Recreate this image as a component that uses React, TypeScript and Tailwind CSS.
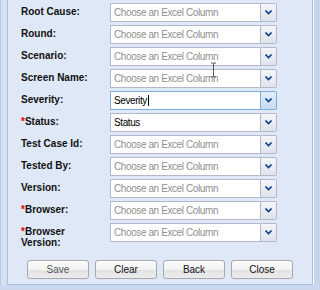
import React from 'react';

interface FieldRow {
  label: string;
  required?: boolean;
  value?: string;
  focused?: boolean;
}

const rows: FieldRow[] = [
  { label: 'Root Cause:' },
  { label: 'Round:' },
  { label: 'Scenario:' },
  { label: 'Screen Name:' },
  { label: 'Severity:', value: 'Severity', focused: true },
  { label: 'Status:', required: true, value: 'Status' },
  { label: 'Test Case Id:' },
  { label: 'Tested By:' },
  { label: 'Version:' },
  { label: 'Browser:', required: true },
  { label: 'Browser Version:', required: true },
];

const Chevron = () => (
  <svg width="7" height="5" viewBox="0 0 7 5" className="block">
    <path d="M0.5 0.5 L3.5 3.5 L6.5 0.5" fill="none" stroke="#15428b" strokeWidth="1.6" />
  </svg>
);

const Combo = ({ value, focused }: { value?: string; focused?: boolean }) => (
  <div className="flex h-[19px] w-[167px]">
    <div
      className={`flex flex-1 items-center border bg-white pl-[3px] text-[10px] tracking-[-0.4px] ${
        focused ? 'border-[#7eadd9]' : 'border-[#b5b8c8]'
      } ${value ? 'text-black' : 'text-[#8f8f8f]'}`}
    >
      {value ?? 'Choose an Excel Column'}
      {focused && <span className="ml-[1px] h-[11px] w-px bg-black" />}
    </div>
    <div
      className={`flex w-[16px] items-center justify-center rounded-r-[2px] border border-l-0 ${
        focused
          ? 'border-[#7eadd9] bg-gradient-to-b from-[#e3eefb] to-[#c7dbf3]'
          : 'border-[#b5b8c8] bg-gradient-to-b from-[#f3f5f8] to-[#dfe4ec]'
      }`}
    >
      <Chevron />
    </div>
  </div>
);

const Btn = ({ label, dim }: { label: string; dim?: boolean }) => (
  <button
    className={`h-[19px] w-[62px] rounded-[3px] border border-[#a9a9a9] bg-[linear-gradient(#fdfdfd_0%,#f2f2f2_50%,#e2e2e2_51%,#ececec_100%)] text-[10px] ${
      dim ? 'text-[#555]' : 'text-[#111]'
    }`}
  >
    {label}
  </button>
);

export default function App() {
  return (
    <div className="relative flex h-[290px] w-[320px] flex-col bg-[#c9d8ec] font-['Liberation_Sans',Arial,sans-serif]">
      <div className="flex flex-1">
        <div className="w-[7px] border-l border-[#b9cbe3] bg-[#d5e1f1]" />
        <div className="flex flex-1 flex-col border-l border-r border-b border-[#a9bfdd] bg-[#dfe8f6]">
          <div className="flex flex-col gap-[3px] pt-[3px] pl-[13px]">
            {rows.map((r) => (
              <div key={r.label} className="flex items-start">
                <div className="w-[89px] pt-[3px] text-[10px] leading-[11px] font-bold text-[#111]">
                  {r.required && <span className="text-[#e00]">*</span>}
                  {r.label === 'Browser Version:' ? (
                    <>
                      Browser
                      <br />
                      Version:
                    </>
                  ) : (
                    r.label
                  )}
                </div>
                <Combo value={r.value} focused={r.focused} />
              </div>
            ))}
          </div>
          <div className="mt-[12px] flex gap-[6px] pl-[19px]">
            <Btn label="Save" dim />
            <Btn label="Clear" />
            <Btn label="Back" />
            <Btn label="Close" />
          </div>
        </div>
        <div className="w-[7px] border-l border-white bg-[#c6d5ea]" />
      </div>
      <div className="h-[5px]" />
      <svg width="7" height="16" viewBox="0 0 7 16" className="absolute left-[210px] top-[62px]">
        <path d="M1 1 H3 M4 1 H6 M3.5 1 V15 M1 15 H3 M4 15 H6" fill="none" stroke="#555" strokeWidth="1" />
      </svg>
    </div>
  );
}
